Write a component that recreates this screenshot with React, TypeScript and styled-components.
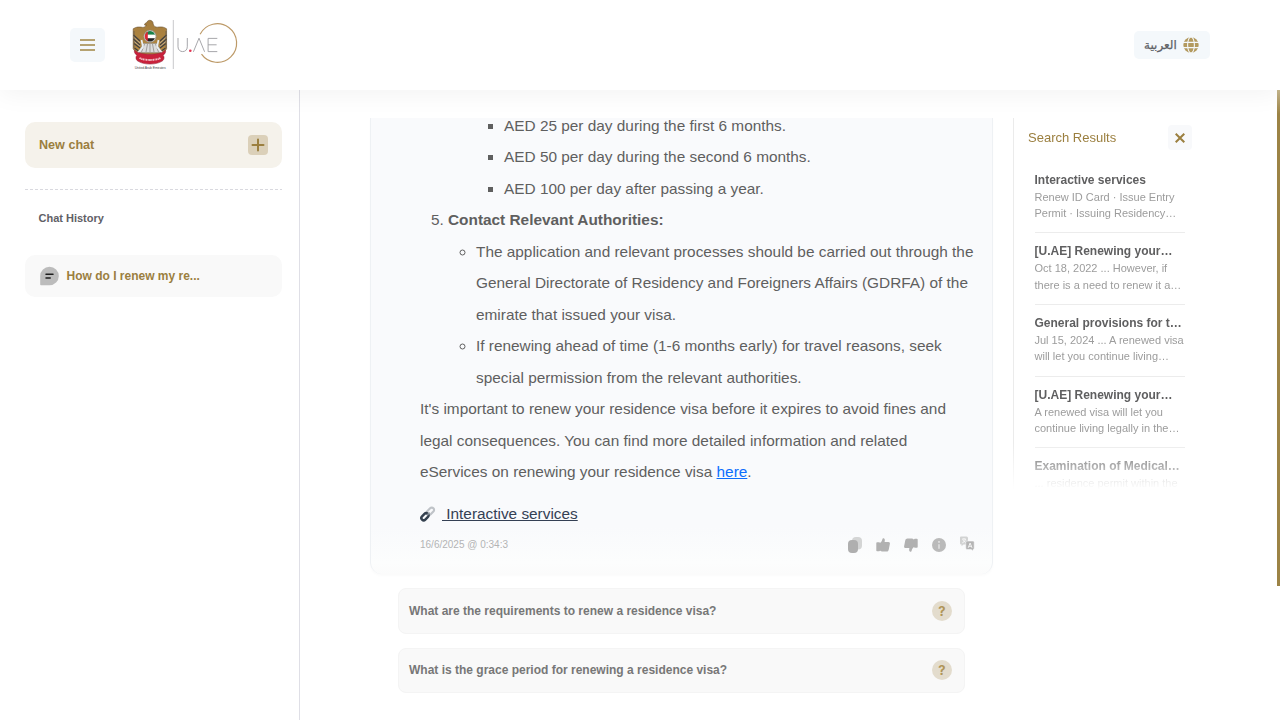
import React from "react";
import styled, { createGlobalStyle } from "styled-components";

const Global = createGlobalStyle`
  * { box-sizing: border-box; }
  html, body { margin: 0; padding: 0; background: #fff; overflow: hidden; }
  body { font-family: "Liberation Sans", Arial, sans-serif; color: #5f5f5f; }
  button { font: inherit; border: 0; padding: 0; cursor: pointer; }
`;

const Page = styled.div`
  width: 1280px;
  height: 720px;
  display: flex;
  flex-direction: column;
  overflow: hidden;
`;

const Header = styled.header`
  height: 90px;
  flex: none;
  display: flex;
  align-items: center;
  padding: 0 70px;
  background: #fff;
  box-shadow: 0 4px 24px rgba(0, 0, 0, 0.05);
  position: relative;
`;

const MenuButton = styled.button`
  width: 35px;
  height: 34px;
  border-radius: 5px;
  background: #f4f8fb;
  display: flex;
  align-items: center;
  justify-content: center;
`;

const Brand = styled.div`
  margin-left: 22px;
  height: 90px;
`;

const LanguageButton = styled.button`
  margin-left: auto;
  width: 76px;
  height: 28px;
  border-radius: 5px;
  background: #f4f8fb;
  color: #5f6266;
  display: flex;
  align-items: center;
  justify-content: space-between;
  padding: 0 11px 0 10px;
`;

const LanguageName = styled.span`
  font: 500 12px/20px "DejaVu Sans", sans-serif;
  -webkit-text-stroke: 0.25px currentColor;
  white-space: nowrap;
`;

const Body = styled.div`
  flex: 1;
  min-height: 0;
  display: flex;
`;

const Sidebar = styled.aside`
  width: 300px;
  flex: none;
  border-right: 1px solid #dfdfe6;
  padding: 32px 17px 0 25px;
`;

const NewChat = styled.button`
  width: 100%;
  height: 46px;
  border-radius: 10px;
  background: #f5f2eb;
  color: #9b7f3f;
  font-weight: 700;
  font-size: 12.6px;
  display: flex;
  align-items: center;
  justify-content: space-between;
  padding: 0 14px 1px;
`;

const PlusBadge = styled.span`
  width: 20px;
  height: 20px;
  border-radius: 4px;
  background: #dbd0b9;
  display: flex;
  align-items: center;
  justify-content: center;
`;

const DashedRule = styled.svg`
  display: block;
  margin-top: 21px;
`;

const HistoryTitle = styled.h2`
  margin: 21px 0 0 13.5px;
  font-size: 11px;
  line-height: 15px;
  color: #5f6066;
`;

const HistoryItem = styled.button`
  margin-top: 29px;
  width: 100%;
  height: 42px;
  border-radius: 10px;
  background: #f9f9f9;
  color: #9b7f3f;
  font-weight: 700;
  font-size: 12px;
  display: flex;
  align-items: center;
  gap: 7px;
  padding-left: 14.5px;
`;

const Conversation = styled.main`
  width: 623px;
  flex: none;
  margin: 28px 0 0 70px;
`;

const Answer = styled.article`
  height: 456px;
  overflow: hidden;
  display: flex;
  flex-direction: column;
  justify-content: flex-end;
  padding: 0 0 21px 49px;
  border: solid #eef1f4;
  border-width: 0 1px;
  border-radius: 0 0 12px 12px;
  background: linear-gradient(#f9fafc 0, #f9fafc 410px, #fcfdfd 445px, #fbfbfb 456px);
  box-shadow: 0 2px 3px rgba(0, 0, 0, 0.02);
`;

const Prose = styled.div`
  font-size: 15.385px;
  line-height: 31.5px;
  color: #5f5f5f;
`;

const Line = styled.span`
  display: block;
  white-space: nowrap;
`;

const Ordered = styled.ol`
  margin: 0;
  padding: 0 0 0 28px;
`;

const Circles = styled.ul<{ $indent?: number }>`
  margin: 0;
  padding: 0 0 0 ${(p) => p.$indent ?? 28}px;
  list-style: circle;
`;

const Squares = styled(Circles)`
  list-style: square;
`;

const HereLink = styled.a`
  color: #0d6efd;
  text-decoration: underline;
`;

const SourceLink = styled.a`
  margin-top: 15.3px;
  height: 22px;
  display: flex;
  align-items: center;
  gap: 6px;
  font-size: 15.36px;
  line-height: 22px;
  color: #344054;
  white-space: pre;

  span { text-decoration: underline; }
`;

const AnswerFooter = styled.footer`
  margin-top: 12px;
  height: 17px;
  display: flex;
  align-items: center;
  justify-content: space-between;
  padding-right: 16px;
`;

const Stamp = styled.time`
  font-size: 10px;
  color: #b3b4b5;
  padding-bottom: 1px;
`;

const Actions = styled.div`
  display: flex;
  align-items: center;
  gap: 12px;
`;

const Suggestion = styled.button<{ $height: number }>`
  width: 567px;
  height: ${(p) => p.$height}px;
  margin: 14px 0 0 28px;
  border: 1px solid #f4f4f4;
  border-radius: 8px;
  background: #f9f9f9;
  color: #777777;
  font-weight: 700;
  font-size: 12px;
  display: flex;
  align-items: center;
  justify-content: space-between;
  padding: 0 12px 0 10px;
`;

const Question = styled.span`
  width: 20px;
  height: 20px;
  border-radius: 50%;
  background: #e3dccd;
  color: #b09558;
  font: 700 13px/21px Inter, sans-serif;
  text-align: center;
`;

const Results = styled.aside`
  width: 192px;
  height: 372px;
  flex: none;
  overflow: hidden;
  margin: 28px 0 0 20px;
  border-left: 1px solid #ebebeb;
  padding-left: 14px;
  mask-image: linear-gradient(#000 0, #000 325px, transparent 372px);
`;

const ResultsHead = styled.div`
  margin-top: 7px;
  width: 164px;
  height: 25px;
  display: flex;
  align-items: center;
  justify-content: space-between;
  color: #9b7f3f;
  font-size: 13px;
`;

const CloseButton = styled.button`
  width: 24px;
  height: 25px;
  border-radius: 4px;
  background: #f8f9fb;
  display: flex;
  align-items: center;
  justify-content: center;
`;

const Result = styled.section`
  width: 150px;
  height: 71.7px;
  margin-left: 6.5px;
  border-bottom: 1px solid #ececec;
  padding-top: 10.2px;
  white-space: nowrap;
`;

const ResultList = styled.div`
  margin-top: 11.5px;
`;

const ResultTitle = styled.h3`
  margin: 0;
  font-size: 12px;
  line-height: 17px;
  color: #5f5f60;
`;

const ResultText = styled.p`
  margin: 0;
  font-size: 11px;
  line-height: 16.3px;
  color: #9c9c9c;
`;

const ScrollThumb = styled.div`
  width: 3px;
  height: 496px;
  margin-left: auto;
  background: linear-gradient(#c4b58c 0, #9c8345 24px, #9c8345 100%);
`;

function Logo() {
  return (
    <svg width="112" height="90" viewBox="127 0 112 90">
      <defs>
        <linearGradient id="gold" x1="0" x2="0" y1="0" y2="1">
          <stop offset="0" stopColor="#a47d3e" />
          <stop offset="1" stopColor="#b58a43" />
        </linearGradient>
        <clipPath id="disc"><circle cx="150" cy="36.3" r="5.2" /></clipPath>
      </defs>
      <path d="M146 25.5c-.4-.6-1-.8-1.6-.6.4-1.500 1.400-2.200 2.400-2.400.6-1.900 2.500-2.600 4.100-2 1.700.6 2.400 2 2.200 3.500 1 2.300 2.100 3.300 4.200 3.200 3.200-.4 6.400-.7 9.300 1.600v20l-3.600 5.600-26-.2-3.800-5.400v-20c3-2.200 6.200-2 9.600-1.400 2 0 3-1 3.500-2.600z" fill="url(#gold)" stroke="#6b5230" strokeWidth=".6" />
      <path d="M133.500 35l6.500 6M133.500 39l6.500 6M134 43.500l6 4.500M134.500 48l4 3M166.500 35l-6.500 6M166.500 39l-6.500 6M166 43.500l-6 4.500M165.500 48l-4 3" stroke="#42403f" strokeWidth="1.300" />
      <path d="M133.500 37l6.500 6M134 41.300l6 5M166.500 37l-6.500 6M166 41.300l-6 5" stroke="#c9c3b8" strokeWidth=".6" />
      <path d="M134 31v17M166 31v17" stroke="#665b4b" strokeWidth=".8" />
      <path d="M143 43.500h14l4.500 9h-23z" fill="#dcdcdc" stroke="#8b8780" strokeWidth=".5" />
      <path d="M144.500 44l-3 8M147.500 44l-1.500 8M150 44v8M152.500 44l1.500 8M155.500 44l3 8" stroke="#85817c" strokeWidth=".7" />
      <path d="M141.500 40l1.500 7-5.500 6 M158.500 40l-1.500 7 5.500 6" stroke="#e9eff2" strokeWidth="1.700" fill="none" />
      <circle cx="150" cy="36.300" r="6.200" fill="#dedad2" stroke="#8a8274" strokeWidth=".7" />
      <g clipPath="url(#disc)">
        <path d="M144 31h12v3.800h-12z" fill="#168149" />
        <path d="M144 34.800h12v3.400h-12z" fill="#fff" />
        <path d="M144 38.200h12v4h-12z" fill="#222" />
        <path d="M144 31h3.800v11H144z" fill="#dc2736" />
      </g>
      <path d="M137 55.500c-1.500 1-1.500 4 .8 5.600 5.800 4 18.600 4 24.400 0 2.300-1.600 2.300-4.600.8-5.600 2.200-1.800 3.300-3.600 2.200-5.300-4.500 5.300-25.900 5.300-30.400 0-1.100 1.700 0 3.500 2.200 5.300z" fill="#c9213b" stroke="#8d2439" strokeWidth=".5" />
      <path d="M139.500 58c5 2.600 16 2.600 21 0" fill="none" stroke="#f2c4ca" strokeWidth="1.900" strokeDasharray="1.600 .5 .8 .4" />
      <text x="134.700" y="69.300" fontSize="3.500" fill="#4c4c4c" textLength="31" fontFamily="Liberation Sans">United Arab Emirates</text>
      <path d="M173.300 20v49" stroke="#c9c9cb" strokeWidth="1" />
      <path d="M178 38v8.800c0 6.400 9.300 6.400 9.300 0V38M193.400 51.800l5.600-13.600 5.600 13.600M217.300 38.400h-9.200v13.200h9.200M208.100 44.800h8.500" fill="none" stroke="#9d9da1" strokeWidth=".9" />
      <circle cx="190.300" cy="50.800" r="1.300" fill="#e23552" />
      <path d="M200.400 34.700A19.300 19.300 0 1 1 201.800 54.500" transform="translate(-.3 -.4)" fill="none" stroke="#bd9a68" strokeWidth="1.200" />
    </svg>
  );
}

function Globe() {
  return (
    <svg width="16" height="16" viewBox="0 0 16 16">
      <circle cx="8" cy="8" r="7.700" fill="#b39a5f" />
      <ellipse cx="8" cy="8" rx="3.400" ry="8" fill="none" stroke="#f4f8fb" strokeWidth="1.100" />
      <path d="M0 5.400h16M0 10.600h16" stroke="#f4f8fb" strokeWidth="1.200" />
    </svg>
  );
}

function ChainIcon() {
  return (
    <svg width="16" height="18" viewBox="0 0 16 18">
      <rect x="-4.200" y="-2.300" width="8.400" height="4.600" rx="2.300" transform="translate(10.400 6.300) rotate(-45)" fill="none" stroke="#bfc3c8" strokeWidth="2.200" />
      <rect x="-4" y="-2.300" width="8" height="4.600" rx="2.300" transform="translate(4.900 11.800) rotate(-45)" fill="none" stroke="#34404f" strokeWidth="2.500" />
      <path d="M7 10.500l2.500-3" stroke="#88909a" strokeWidth="1.500" />
    </svg>
  );
}

const thumb =
  "M.3 5.500C.3 5 .6 4.700 1.100 4.700h2c.6 0 .9.300.9.700 1.200-.9 2-2 2.300-3.500C6.500.8 7.100.5 7.700.7c1.200.4 1.400 1.700.9 3.700h3.800c1.100 0 1.700.8 1.500 1.800l-1.200 6c-.3 1.200-1 1.900-2.200 1.900H6.800c-1.200 0-2-.5-2.800-1.100 0 .5-.4.800-.9.800h-2c-.5 0-.8-.3-.8-.8z";

function CopyIcon() {
  return (
    <svg width="16" height="16" viewBox="0 0 16 16">
      <rect x="5" y="0" width="10" height="12.500" rx="4" fill="#d4d5d5" />
      <rect x="1" y="3" width="10" height="13" rx="4" fill="#afafaf" />
    </svg>
  );
}

function ThumbIcon({ down }: { down?: boolean }) {
  return (
    <svg width="16" height="16" viewBox="-1 -.5 16 16">
      <path d={thumb} fill="#b1b1b1" transform={down ? "rotate(180 7 7.500)" : undefined} />
    </svg>
  );
}

function InfoIcon() {
  return (
    <svg width="16" height="16" viewBox="0 0 16 16">
      <circle cx="8" cy="8" r="7" fill="#bababa" />
      <path d="M8 7.200v4.500" stroke="#e8e8e8" strokeWidth="1.300" />
      <circle cx="8" cy="4.900" r=".9" fill="#e8e8e8" />
    </svg>
  );
}

const Translate = styled.svg`
  margin-top: -3px;
`;

function TranslateIcon() {
  return (
    <Translate width="17" height="18" viewBox="0 -.5 17 18">
      <path d="M2 1h5.500A1.500 1.500 0 0 1 9 2.500V9H4.500L2.600 10.800V9H2.200A1.200 1.200 0 0 1 1 7.800V2a1 1 0 0 1 1-1z" fill="#d2d3d3" />
      <path d="M3 3.600h4M5 2.600v1M6.500 3.800c-.5 1.700-1.500 2.800-3.200 3.500M3.700 4.600l3 2.500" stroke="#fafafa" strokeWidth=".9" fill="none" />
      <path d="M8 5.600h6A1.200 1.200 0 0 1 15.200 6.800v6A1.200 1.200 0 0 1 14 14v1.500L12.200 14H8a1.200 1.200 0 0 1-1.200-1.200v-6A1.200 1.200 0 0 1 8 5.600z" fill="#b5b5b5" stroke="#fafbfc" strokeWidth=".5" />
      <path d="M9.200 12.300l1.900-4.800 1.900 4.800M9.900 10.800h2.400" stroke="#f3f3f3" strokeWidth="1" fill="none" />
    </Translate>
  );
}

const results = [
  ["Interactive services", "Renew ID Card · Issue Entry", "Permit · Issuing Residency…"],
  ["[U.AE] Renewing your…", "Oct 18, 2022 ... However, if", "there is a need to renew it a…"],
  ["General provisions for t…", "Jul 15, 2024 ... A renewed visa", "will let you continue living…"],
  ["[U.AE] Renewing your…", "A renewed visa will let you", "continue living legally in the…"],
  ["Examination of Medical…", "... residence permit within the", ""],
];

export default function App() {
  return (
    <>
      <Global />
      <Page>
        <Header>
          <MenuButton aria-label="Menu">
            <svg width="15" height="12" viewBox="0 0 15 12">
              <path d="M0 1h15M0 6h15M0 11h15" stroke="#a08544" strokeWidth="1.600" />
            </svg>
          </MenuButton>
          <Brand><Logo /></Brand>
          <LanguageButton>
            <LanguageName>العربية</LanguageName>
            <Globe />
          </LanguageButton>
        </Header>
        <Body>
          <Sidebar>
            <NewChat>
              New chat
              <PlusBadge>
                <svg width="14" height="14" viewBox="0 0 14 14">
                  <path d="M7 1.500v11M1.500 7h11" stroke="#9b7f3f" strokeWidth="2" strokeLinecap="round" />
                </svg>
              </PlusBadge>
            </NewChat>
            <DashedRule width="257" height="1">
              <path d="M0 .5h257" stroke="#d9d9df" strokeDasharray="3 2" />
            </DashedRule>
            <HistoryTitle>Chat History</HistoryTitle>
            <HistoryItem>
              <svg width="20" height="20" viewBox="0 0 20 20">
                <path d="M9.500 .7a9.300 9.300 0 1 1 0 18.600H1a.8.800 0 0 1-.8-.8V10A9.300 9.300 0 0 1 9.500 .7z" fill="#bcbcbc" />
                <path d="M6 8.200h7M6 11.900h4.200" stroke="#1d1d1d" strokeWidth="1.500" strokeLinecap="round" />
              </svg>
              How do I renew my re...
            </HistoryItem>
          </Sidebar>
          <Conversation>
            <Answer>
              <Prose>
                <Ordered start={5}>
                  <Squares $indent={56}>
                    <li>AED 25 per day during the first 6 months.</li>
                    <li>AED 50 per day during the second 6 months.</li>
                    <li>AED 100 per day after passing a year.</li>
                  </Squares>
                  <li>
                    <b>Contact Relevant Authorities:</b>
                    <Circles>
                      <li>
                        <Line>The application and relevant processes should be carried out through the</Line>
                        <Line>General Directorate of Residency and Foreigners Affairs (GDRFA) of the</Line>
                        <Line>emirate that issued your visa.</Line>
                      </li>
                      <li>
                        <Line>If renewing ahead of time (1-6 months early) for travel reasons, seek</Line>
                        <Line>special permission from the relevant authorities.</Line>
                      </li>
                    </Circles>
                  </li>
                </Ordered>
                <Line>It's important to renew your residence visa before it expires to avoid fines and</Line>
                <Line>legal consequences. You can find more detailed information and related</Line>
                <Line>eServices on renewing your residence visa <HereLink>here</HereLink>.</Line>
              </Prose>
              <SourceLink>
                <ChainIcon />
                <span>{" Interactive services"}</span>
              </SourceLink>
              <AnswerFooter>
                <Stamp>16/6/2025 @ 0:34:3</Stamp>
                <Actions>
                  <CopyIcon />
                  <ThumbIcon />
                  <ThumbIcon down />
                  <InfoIcon />
                  <TranslateIcon />
                </Actions>
              </AnswerFooter>
            </Answer>
            <Suggestion $height={46}>
              What are the requirements to renew a residence visa?
              <Question>?</Question>
            </Suggestion>
            <Suggestion $height={44.5}>
              What is the grace period for renewing a residence visa?
              <Question>?</Question>
            </Suggestion>
          </Conversation>
          <Results>
            <ResultsHead>
              Search Results
              <CloseButton aria-label="Close">
                <svg width="10" height="10" viewBox="0 0 10 10">
                  <path d="M.7 .7l8.600 8.600M9.300 .7L.7 9.300" stroke="#9b7f3f" strokeWidth="2" />
                </svg>
              </CloseButton>
            </ResultsHead>
            <ResultList>
              {results.map(([title, first, second], i) => (
                <Result key={i}>
                  <ResultTitle>{title}</ResultTitle>
                  <ResultText>{first}<br />{second}</ResultText>
                </Result>
              ))}
            </ResultList>
          </Results>
          <ScrollThumb />
        </Body>
      </Page>
    </>
  );
}
